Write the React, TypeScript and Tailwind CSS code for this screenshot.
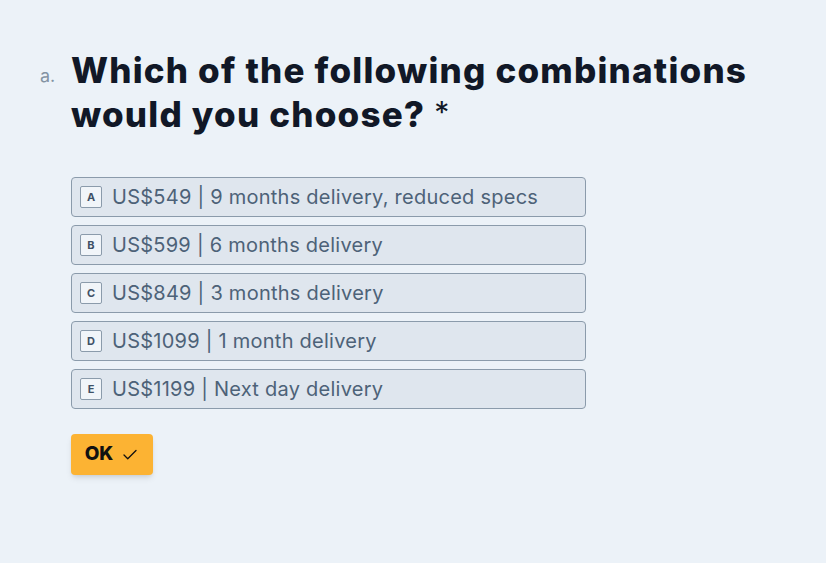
import { Check } from 'lucide-react'

const OPTIONS = [
  { key: 'A', label: 'US$549 | 9 months delivery, reduced specs' },
  { key: 'B', label: 'US$599 | 6 months delivery' },
  { key: 'C', label: 'US$849 | 3 months delivery' },
  { key: 'D', label: 'US$1099 | 1 month delivery' },
  { key: 'E', label: 'US$1199 | Next day delivery' }
]

function OptionRow({ optKey, label }: { optKey: string; label: string }) {
  return (
    <div className="flex h-10 w-[515px] items-center rounded border border-[#8b9bab] bg-[#dfe6ee] pl-2">
      <span className="flex h-[22px] w-[22px] items-center justify-center rounded-[2px] border border-[#8b9bab] bg-[#f1f5f9] text-[11px] font-bold text-[#3f5166]">
        {optKey}
      </span>
      <span className="ml-[10px] text-[20px] leading-none tracking-[0.25px] text-[#4d6278]">{label}</span>
    </div>
  )
}

export default function App() {
  return (
    <div
      className="min-h-[563px] w-full bg-[#ecf2f8] pt-[48px]"
      style={{ fontFamily: 'Inter, "Noto Sans", sans-serif' }}
    >
      <div className="flex">
        <div className="w-[71px] shrink-0 pl-[40px] pt-[14px] text-[18px] text-[#8393a3]">a.</div>
        <div className="flex flex-col">
          <h1 className="h-[88px] text-[35px] font-extrabold leading-[44px] tracking-[1.2px] text-[#111827]">
            Which of the following combinations
            <br />
            would you choose?{' '}
            <span className="relative -top-1 text-[30px] leading-none font-normal">*</span>
          </h1>

          <div className="mt-[41px] flex flex-col gap-2">
            {OPTIONS.map((opt) => (
              <OptionRow key={opt.key} optKey={opt.key} label={opt.label} />
            ))}
          </div>

          <button
            type="button"
            className="mt-[25px] flex h-[41px] w-[82px] items-center justify-center gap-2 rounded bg-[#fcb333] text-[19px] font-extrabold text-[#111] shadow-md"
          >
            OK
            <Check className="h-[18px] w-[18px]" strokeWidth={1.75} />
          </button>
        </div>
      </div>
    </div>
  )
}
